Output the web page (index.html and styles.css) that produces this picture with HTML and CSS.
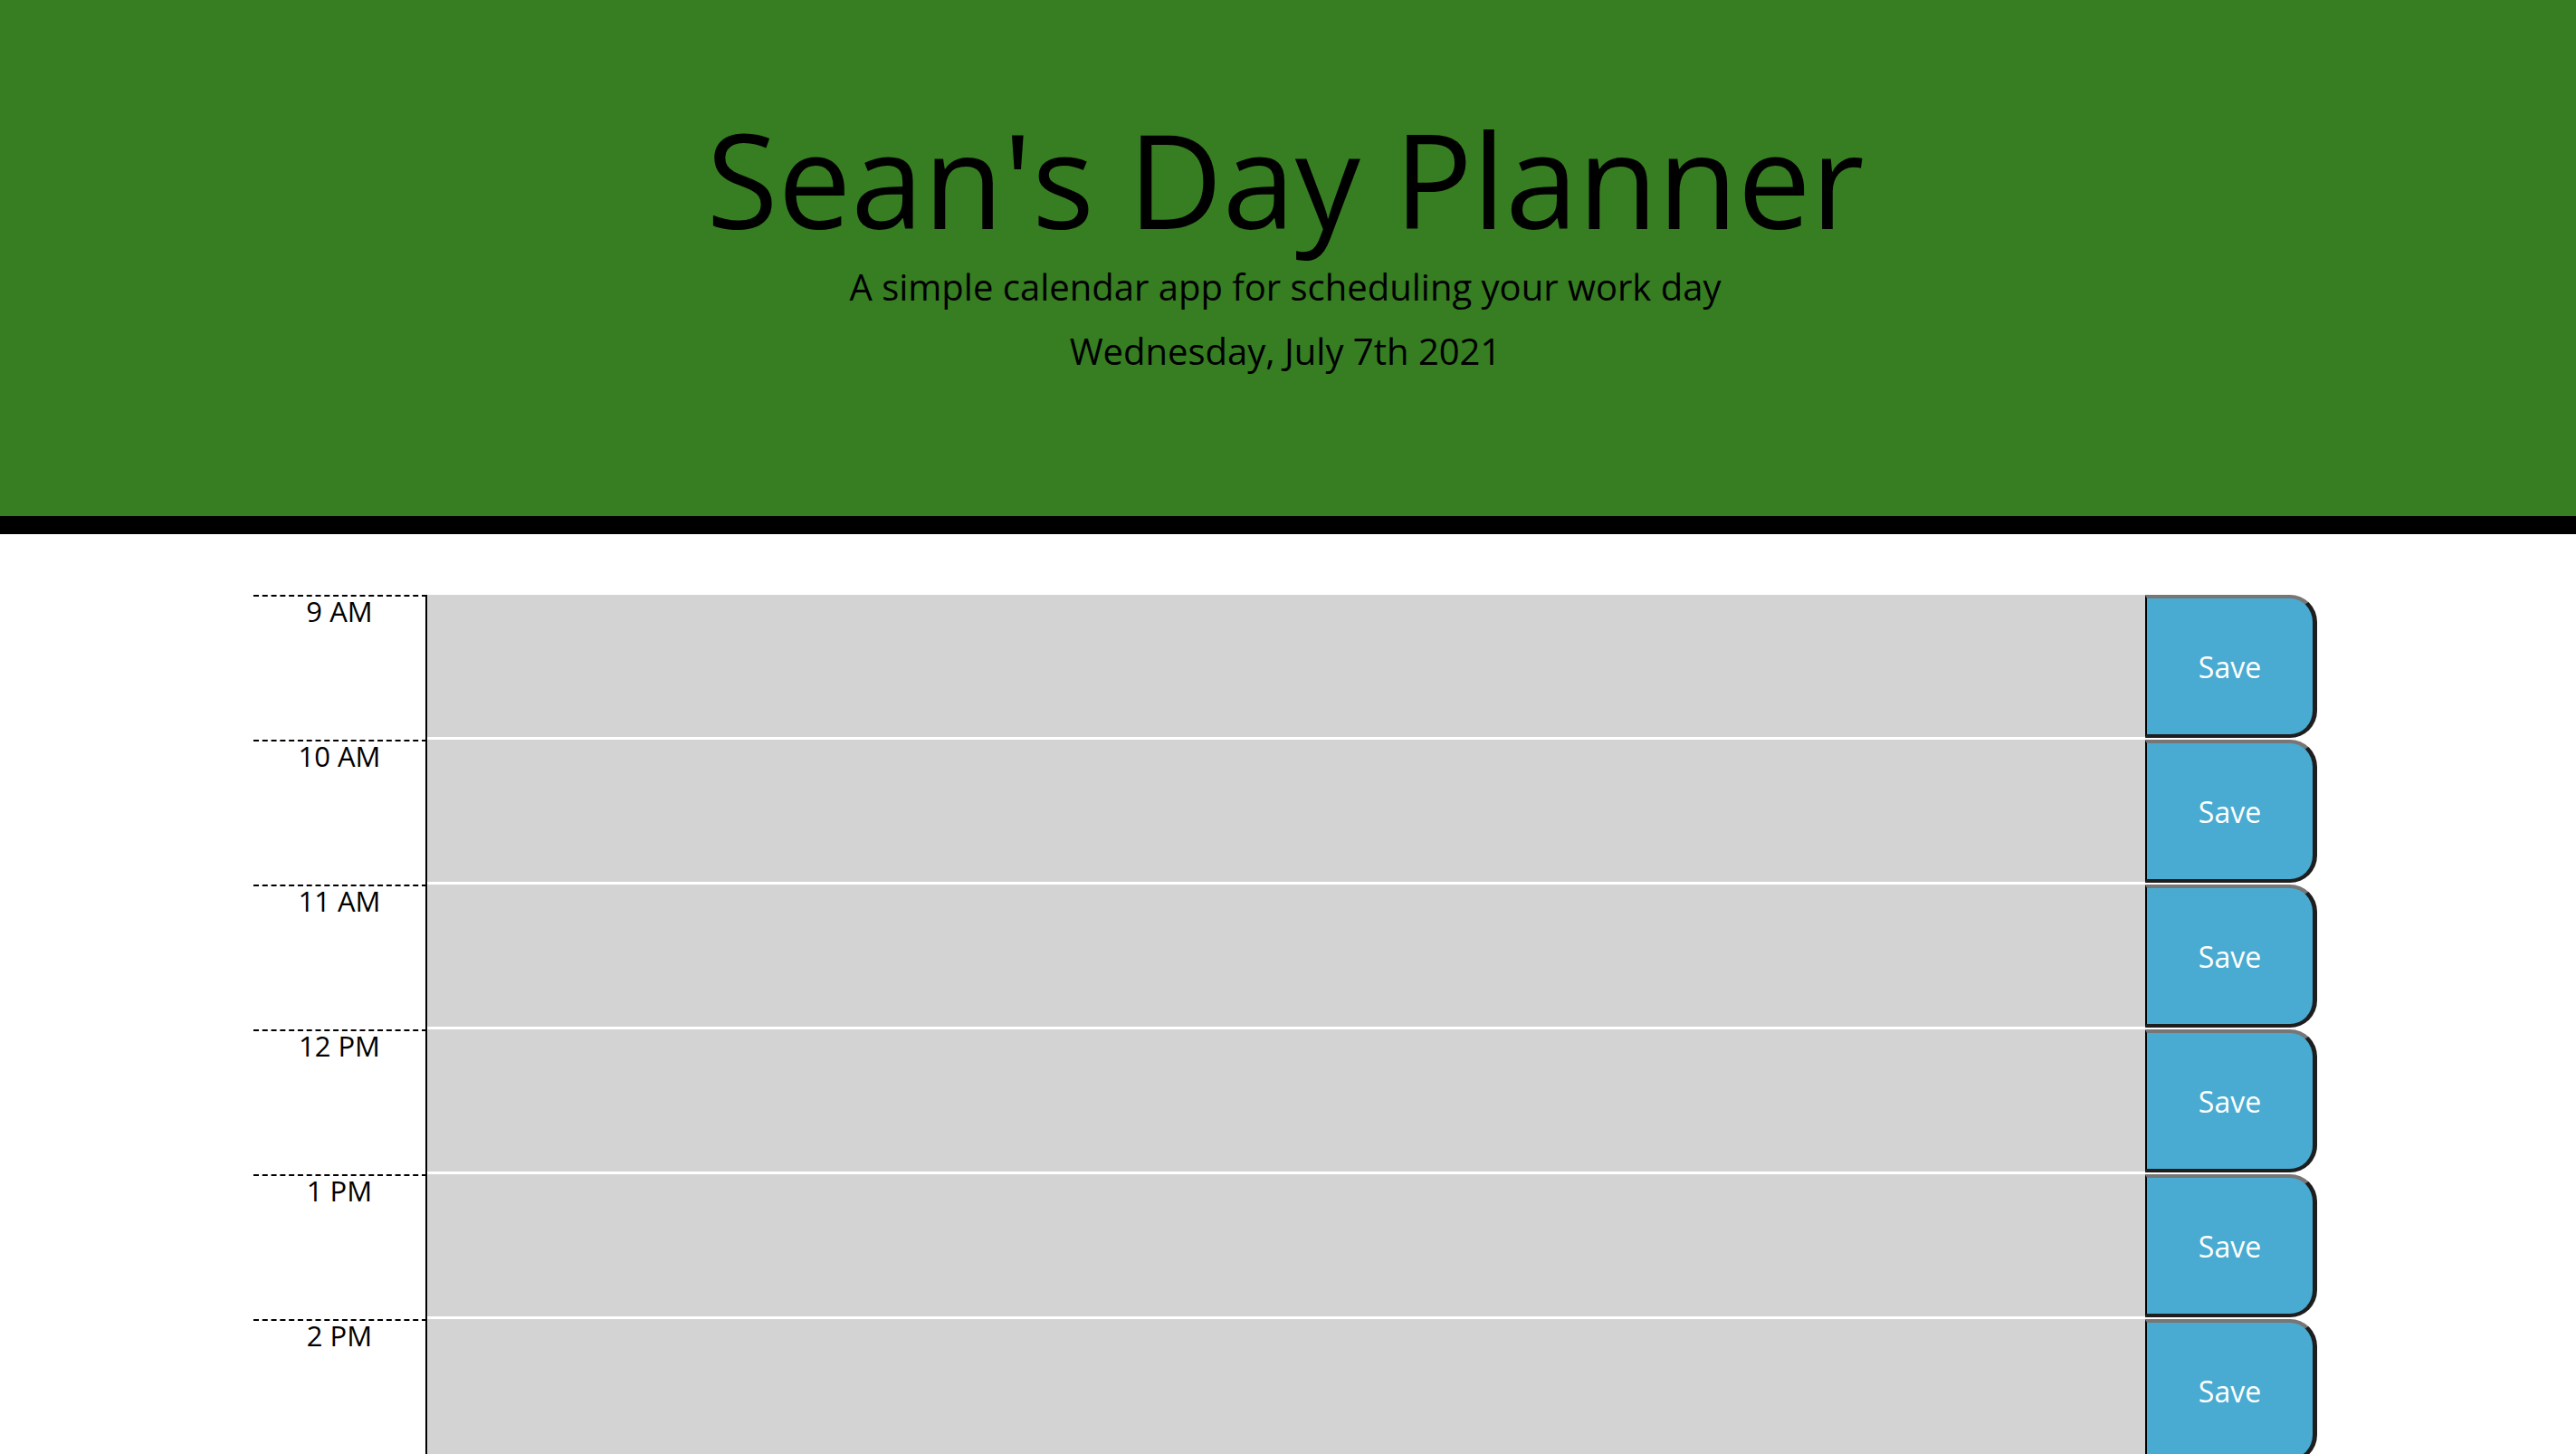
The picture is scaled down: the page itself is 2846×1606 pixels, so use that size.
FILE: index.html
```html
<!DOCTYPE html>
<html lang="en">
<head>
<meta charset="utf-8">
<title>Sean's Day Planner</title>
<link rel="stylesheet" href="styles.css">
</head>
<body>
<header class="jumbotron">
  <h1 class="title">Sean's Day Planner</h1>
  <p class="lead">A simple calendar app for scheduling your work day</p>
  <p class="current-day">Wednesday, July 7th 2021</p>
</header>
<main class="container">
  <div class="time-block">
    <div class="hour">9 AM</div>
    <textarea class="description"></textarea>
    <button class="saveBtn">Save</button>
  </div>
  <div class="time-block">
    <div class="hour">10 AM</div>
    <textarea class="description"></textarea>
    <button class="saveBtn">Save</button>
  </div>
  <div class="time-block">
    <div class="hour">11 AM</div>
    <textarea class="description"></textarea>
    <button class="saveBtn">Save</button>
  </div>
  <div class="time-block">
    <div class="hour">12 PM</div>
    <textarea class="description"></textarea>
    <button class="saveBtn">Save</button>
  </div>
  <div class="time-block">
    <div class="hour">1 PM</div>
    <textarea class="description"></textarea>
    <button class="saveBtn">Save</button>
  </div>
  <div class="time-block">
    <div class="hour">2 PM</div>
    <textarea class="description"></textarea>
    <button class="saveBtn">Save</button>
  </div>
  <div class="time-block">
    <div class="hour">3 PM</div>
    <textarea class="description"></textarea>
    <button class="saveBtn">Save</button>
  </div>
  <div class="time-block">
    <div class="hour">4 PM</div>
    <textarea class="description"></textarea>
    <button class="saveBtn">Save</button>
  </div>
  <div class="time-block">
    <div class="hour">5 PM</div>
    <textarea class="description"></textarea>
    <button class="saveBtn">Save</button>
  </div>
</main>
</body>
</html>
```
FILE: styles.css
```css
html, body {
  margin: 0;
  padding: 0;
}
body {
  font-family: "Open Sans", "Noto Sans", sans-serif;
  color: #000;
  background: #fff;
}
.jumbotron {
  box-sizing: border-box;
  height: 590px;
  background-color: #377d22;
  border-bottom: 20px solid #000;
  padding: 99px 6px 0 0;
  text-align: center;
}
.title {
  margin: 0;
  font-size: 144px;
  font-weight: 400;
  line-height: 196px;
}
.lead {
  margin: 2px 0 0;
  font-size: 40px;
  line-height: 40px;
}
.current-day {
  margin: 31px 0 0;
  font-size: 40px;
  line-height: 40px;
}
.container {
  width: 2280px;
  margin: 67px 0 0 280px;
}
.time-block {
  display: flex;
  height: 160px;
}
.hour {
  box-sizing: border-box;
  width: 192px;
  border-top: 2px dashed #000;
  border-right: 2px solid #000;
  text-align: center;
  font-size: 31px;
  line-height: 32px;
}
.description {
  box-sizing: border-box;
  width: 1898px;
  height: 157px;
  margin: 0;
  padding: 0;
  border: none;
  background: #d3d3d3;
  resize: none;
  font-family: inherit;
}
.saveBtn {
  box-sizing: border-box;
  width: 190px;
  height: 158px;
  margin: 0;
  background-color: #49abd1;
  color: #fff;
  font-family: "Open Sans", "Noto Sans", sans-serif;
  font-size: 32px;
  border-style: solid;
  border-width: 4px 5px 4px 2px;
  border-color: #767676 #1e1e1e #1e1e1e #000;
  border-radius: 0 30px 30px 0;
  padding: 0;
}
```
